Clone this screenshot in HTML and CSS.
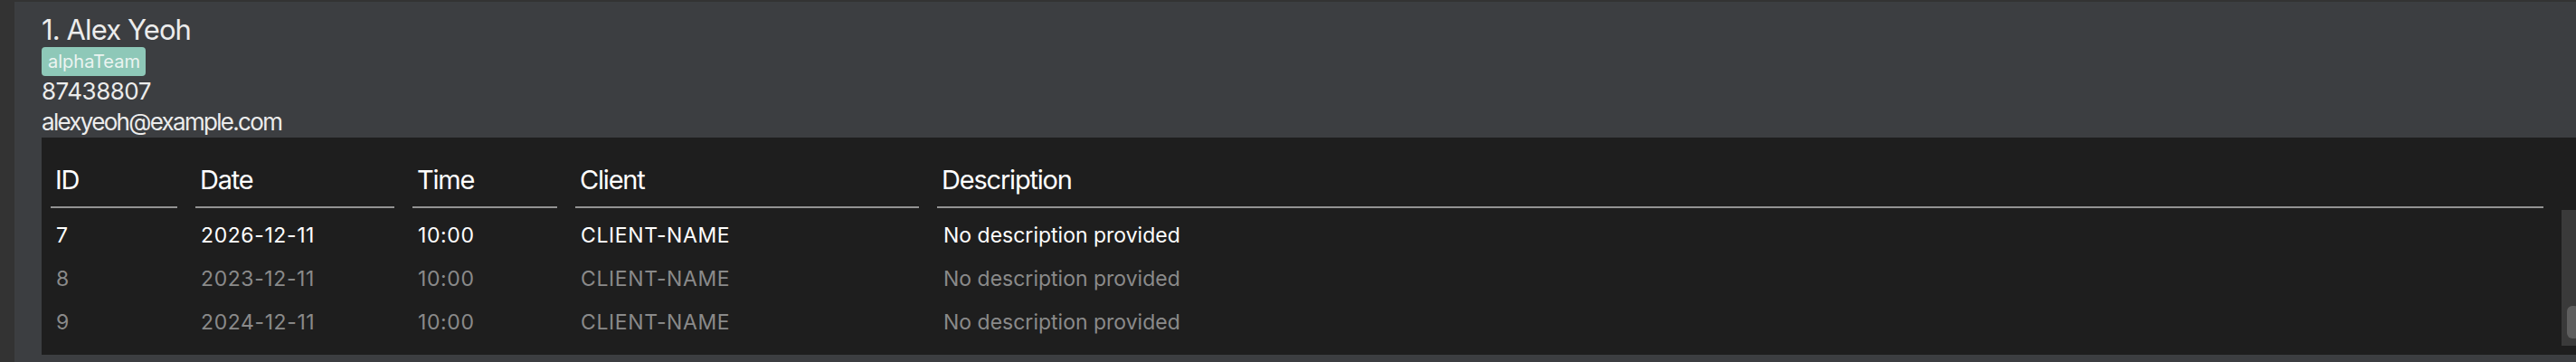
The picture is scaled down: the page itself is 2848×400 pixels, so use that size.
FILE: index.html
```html
<!DOCTYPE html>
<html lang="en">
<head>
<meta charset="utf-8">
<title>Person card</title>
<link rel="stylesheet" href="styles.css">
</head>
<body>
<div class="card">
  <div class="name">1. Alex Yeoh</div>
  <div class="tags"><span class="tag">alphaTeam</span></div>
  <div class="line phone">87438807</div>
  <div class="line email">alexyeoh@example.com</div>
  <div class="table">
    <div class="head">
      <div class="th"><span>ID</span></div>
      <div class="th"><span>Date</span></div>
      <div class="th"><span>Time</span></div>
      <div class="th"><span>Client</span></div>
      <div class="th"><span>Description</span></div>
    </div>
    <div class="body">
      <div class="row current">
        <div class="td">7</div>
        <div class="td">2026-12-11</div>
        <div class="td">10:00</div>
        <div class="td">CLIENT-NAME</div>
        <div class="td desc">No description provided</div>
      </div>
      <div class="row past">
        <div class="td">8</div>
        <div class="td">2023-12-11</div>
        <div class="td">10:00</div>
        <div class="td">CLIENT-NAME</div>
        <div class="td desc">No description provided</div>
      </div>
      <div class="row past">
        <div class="td">9</div>
        <div class="td">2024-12-11</div>
        <div class="td">10:00</div>
        <div class="td">CLIENT-NAME</div>
        <div class="td desc">No description provided</div>
      </div>
      <div class="scrollbar"><div class="thumb"></div></div>
    </div>
  </div>
</div>
</body>
</html>
```

FILE: styles.css
```css
html, body {
  margin: 0;
  padding: 0;
  background: #333333;
  height: 400px;
  overflow: hidden;
}
body {
  font-family: Inter, "Liberation Sans", sans-serif;
  padding-top: 2px;
  padding-left: 16px;
  box-sizing: border-box;
}
.card {
  background: #3c3e41;
  height: 398px;
  padding: 13px 0 0 30px;
  box-sizing: border-box;
  color: #ececec;
}
.name {
  font-size: 31px;
  line-height: 36px;
  letter-spacing: -0.9px;
}
.tags {
  display: flex;
  margin-top: 1px;
}
.tag {
  background: #8ec8b8;
  color: #ebf4f1;
  font-size: 20px;
  line-height: 32px;
  height: 32px;
  padding: 0 6px 0 7px;
  border-radius: 4px;
}
.line {
  font-size: 26px;
  line-height: 34px;
}
.phone {
  letter-spacing: -0.5px;
}
.email {
  letter-spacing: -1.7px;
}
.table {
  background: #1e1e1e;
  height: 240px;
  padding-right: 26px;
  box-sizing: border-box;
  color: #ffffff;
}
.head, .row {
  display: grid;
  grid-template-columns: 160px 240px 180px 400px 1fr;
}
.th {
  padding: 28px 10px 0 10px;
}
.th span {
  display: block;
  font-size: 29px;
  line-height: 37px;
  letter-spacing: -1.2px;
  padding: 0 0 11px 5px;
  border-bottom: 2px solid #939393;
}
.body {
  position: relative;
  padding-top: 6px;
  height: 162px;
  box-sizing: border-box;
}
.row {
  font-size: 23px;
  line-height: 48px;
  height: 48px;
}
.td {
  padding-left: 16px;
  white-space: nowrap;
  letter-spacing: 0.6px;
}
.td.desc {
  padding-left: 17px;
  letter-spacing: 0;
}
.row.current { color: #ffffff; }
.row.past { color: #8a8a8a; }
.scrollbar {
  position: absolute;
  right: -26px;
  top: 2px;
  width: 16px;
  height: 150px;
  background: #3a3a3a;
  overflow: hidden;
}
.thumb {
  position: absolute;
  left: 6px;
  top: 106px;
  width: 14px;
  height: 36px;
  border-radius: 6px;
  background: #5e5e5e;
}
```
